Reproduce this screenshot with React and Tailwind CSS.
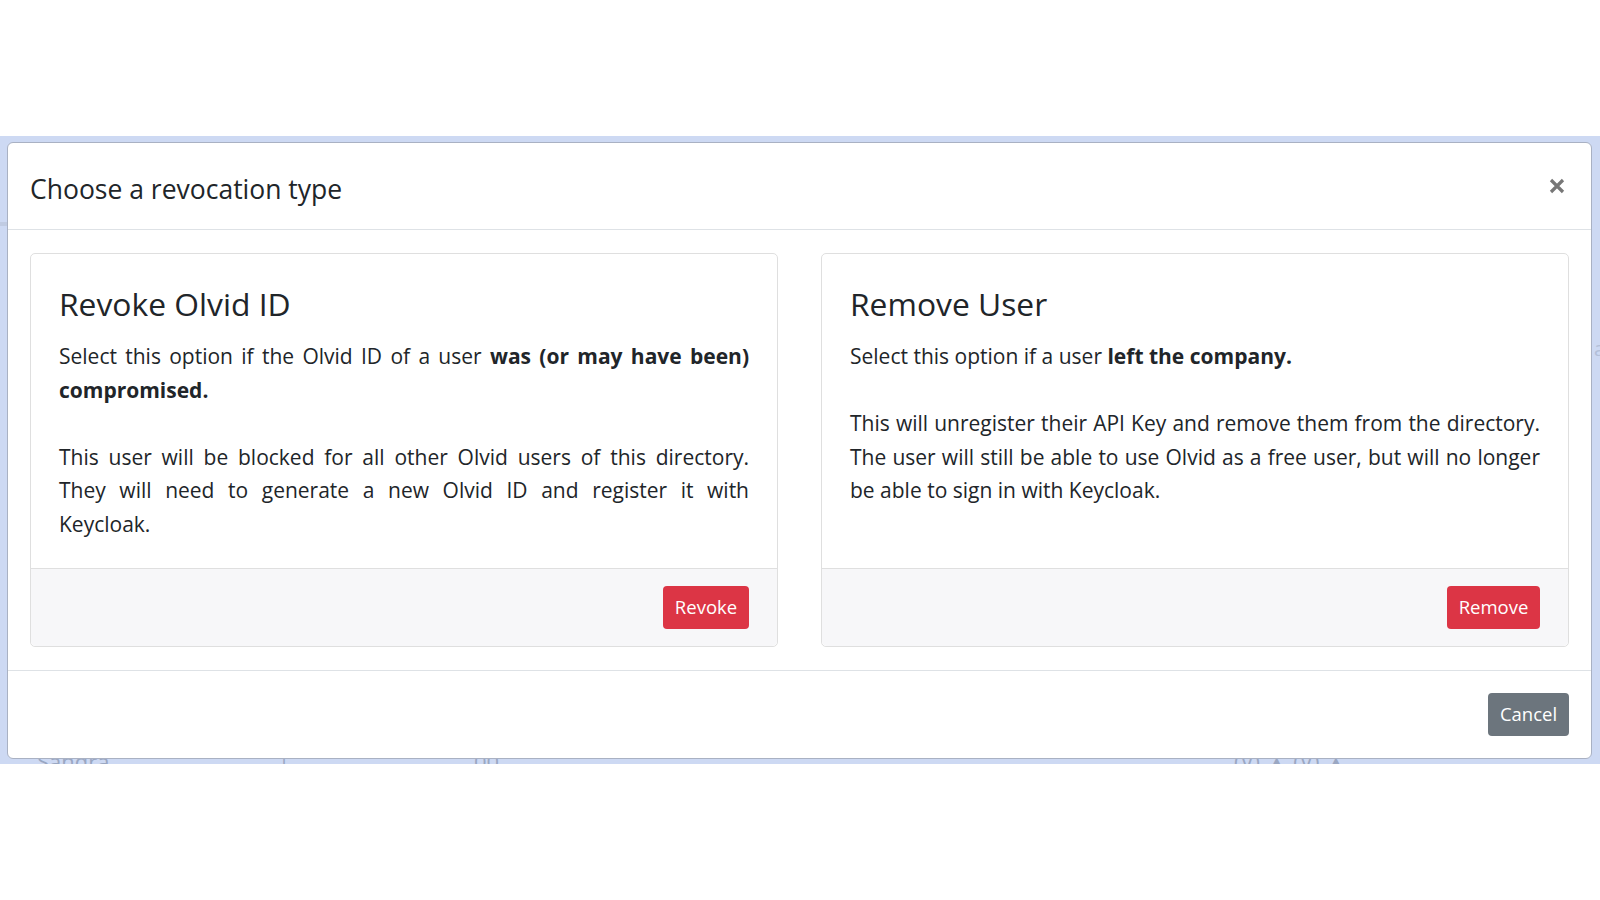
import React from 'react'

/**
 * One line of a justified paragraph. Lines are spelled out so the
 * wraps land where they do in the original dialog.
 */
function Line({ children, justify = false }) {
  return (
    <span className={`block ${justify ? 'text-justify [text-align-last:justify]' : ''}`}>
      {children}
    </span>
  )
}

function Blank() {
  return <span className="block h-[33.6px]" />
}

function OptionCard({ title, children, action }) {
  return (
    <div className="flex flex-col rounded-[5px] border border-[#dfdfdf] bg-white">
      <div className="flex-1 px-[28px] pt-[28px] pb-[26px]">
        <h4 className="mb-[14px] text-[31.8px] leading-[44px] font-normal text-[#212529]">{title}</h4>
        <p className="text-[21px] leading-[33.6px] text-[#212529]">{children}</p>
      </div>
      <div className="flex justify-end rounded-b-[5px] border-t border-[#dfdfdf] bg-[#f7f7f9] px-[28px] py-[17px]">
        {action}
      </div>
    </div>
  )
}

function DangerButton({ children, width }) {
  return (
    <button className={`flex h-[43px] ${width} items-center justify-center rounded-[4px] bg-[#dc3545] text-[18.5px] text-white`}>
      {children}
    </button>
  )
}

export default function App() {
  return (
    <div className="min-h-screen bg-white pt-[136px] font-['Open_Sans','Noto_Sans',sans-serif]">
      {/* backdrop band */}
      <div className="relative overflow-hidden bg-[#cdd9f3] pt-[6px] pr-[8px] pb-[5px] pl-[7px]">
        {/* page content faintly showing under the backdrop */}
        <span className="absolute left-[37px] top-[609px] text-[22px] text-[#9aa7c2]">Sandra</span>
        <span className="absolute left-[278px] top-[609px] text-[22px] text-[#9aa7c2]">|</span>
        <span className="absolute left-[474px] top-[609px] text-[22px] text-[#9aa7c2]">00</span>
        <span className="absolute left-[1234px] top-[609px] text-[22px] text-[#9aa7c2]">(V) ▲ (V) ▲</span>
        <span className="absolute left-[1594px] top-[198px] text-[20px] text-[#b3bfd8]">a</span>
        <span className="absolute left-0 top-[86px] h-[4px] w-[7px] bg-[#c0cbe2]" />

        {/* modal */}
        <div className="relative rounded-[6px] border border-[#a9b1c3] bg-white">
          <div className="flex items-start justify-between border-b border-[#dee2e6] px-[22px] pt-[25px] pb-[19px]">
            <h5 className="text-[26.5px] leading-[42px] text-[#212529]">Choose a revocation type</h5>
            <button className="mt-[10px] mr-[4px] text-[#777777]" aria-label="Close">
              <svg width="16" height="16" viewBox="0 0 16 16" stroke="currentColor" strokeWidth="3.2" strokeLinecap="butt">
                <path d="M2 2L14 14M14 2L2 14" />
              </svg>
            </button>
          </div>

          <div className="grid grid-cols-2 gap-[43px] px-[22px] pt-[23px] pb-[23px]">
            <OptionCard
              title="Revoke Olvid ID"
              action={<DangerButton width="w-[86px]">Revoke</DangerButton>}
            >
              <Line justify>
                Select this option if the Olvid ID of a user <b>was (or may have been)</b>
              </Line>
              <Line><b>compromised.</b></Line>
              <Blank />
              <Line justify>This user will be blocked for all other Olvid users of this directory.</Line>
              <Line justify>They will need to generate a new Olvid ID and register it with</Line>
              <Line>Keycloak.</Line>
            </OptionCard>

            <OptionCard
              title="Remove User"
              action={<DangerButton width="w-[93px]">Remove</DangerButton>}
            >
              <Line>
                Select this option if a user <b>left the company.</b>
              </Line>
              <Blank />
              <Line justify>This will unregister their API Key and remove them from the directory.</Line>
              <Line justify>The user will still be able to use Olvid as a free user, but will no longer</Line>
              <Line>be able to sign in with Keycloak.</Line>
            </OptionCard>
          </div>

          <div className="flex justify-end border-t border-[#dee2e6] p-[22px]">
            <button className="flex h-[43px] w-[81px] items-center justify-center rounded-[4px] bg-[#6c757d] text-[18.5px] text-white">
              Cancel
            </button>
          </div>
        </div>
      </div>
    </div>
  )
}
